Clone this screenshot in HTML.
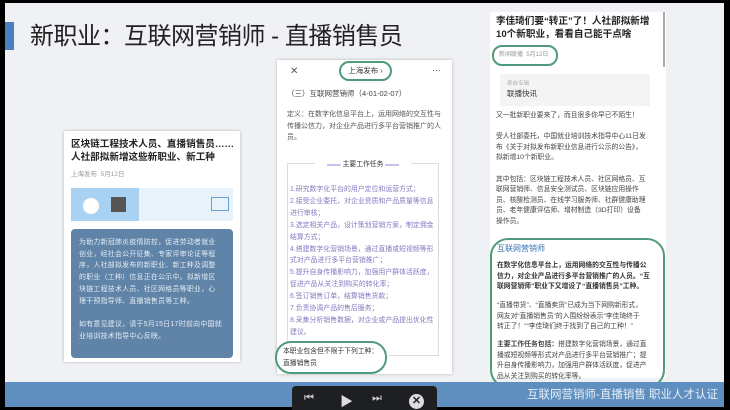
<!DOCTYPE html><html><head><meta charset="utf-8"><style>
*{margin:0;padding:0;box-sizing:border-box}
body{width:730px;height:410px;background:#000;position:relative;overflow:hidden;font-family:"Liberation Sans","Noto Sans CJK SC",sans-serif}
.slide{position:absolute;left:5px;top:3px;width:719px;height:404px;background:#eff1f4}
.abs{position:absolute;white-space:nowrap}
.card{position:absolute;background:#fff;box-shadow:0 0 3px rgba(0,0,0,.25)}
.g{position:absolute;border:2px solid #4f9a7a;border-radius:10px}
</style></head><body>
<div class="slide">
<div class="abs" style="left:0;top:19px;width:9px;height:28px;background:#4a7fc0"></div>
<div class="abs" style="left:25px;top:19px;font-size:24px;color:#222;line-height:30px;letter-spacing:-0.5px">新职业：互联网营销师 - 直播销售员</div>

<div class="card" style="left:59px;top:128px;width:176px;height:231px">
<div class="abs" style="left:7px;top:7px;font-size:9.6px;font-weight:bold;line-height:13px;color:#222">区块链工程技术人员、直播销售员……<br>人社部拟新增这些新职业、新工种</div>
<div class="abs" style="left:7px;top:37px;font-size:6.5px;color:#999">上海发布 &nbsp;5月12日</div>
<div class="abs" style="left:7px;top:57px;width:162px;height:33px;background:#a9d2f2"><div class="abs" style="left:68px;top:0;width:94px;height:33px;background:#e8f2fb"></div><div class="abs" style="left:12px;top:10px;width:16px;height:16px;background:#fff;border-radius:50%"></div><div class="abs" style="left:40px;top:9px;width:15px;height:15px;background:#555"></div><div class="abs" style="left:140px;top:9px;width:18px;height:14px;border:1px solid #6aa0d8"></div></div>
<div class="abs" style="left:7px;top:98px;width:162px;height:129px;background:#5f84a8;border-radius:4px;color:#e4ecf4;font-size:6.9px;line-height:11.7px;padding:8px 8px;letter-spacing:0.3px">为助力新冠肺炎疫情防控，促进劳动者就业<br>创业，经社会公开征集、专家评审论证等程<br>序，人社部拟发布的新职业、新工种及调整<br>的职业（工种）信息正在公示中。拟新增区<br>块链工程技术人员、社区网格员等职业，心<br>理干预指导师、直播销售员等工种。<br><br>如有意见建议，请于5月15日17时前向中国就<br>业培训技术指导中心反映。</div>
</div>

<div class="card" style="left:272px;top:57px;width:175px;height:314px">
<div class="abs" style="left:13px;top:6px;font-size:10px;color:#555">✕</div>
<div class="abs" style="left:155px;top:5px;font-size:9px;color:#555">···</div>
<div class="g" style="left:62px;top:1px;width:53px;height:20px;font-size:7.5px;color:#333;text-align:center;line-height:16px">上海发布 ›</div>
<div class="abs" style="left:10px;top:28px;font-size:7.5px;color:#444">（三）互联网营销师（4-01-02-07）</div>
<div class="abs" style="left:10px;top:49px;font-size:7px;line-height:11.5px;color:#555">定义：在数字化信息平台上，运用网络的交互性与<br>传播公信力，对企业产品进行多平台营销推广的人<br>员。</div>
<div class="abs" style="left:10px;top:103px;width:152px;height:193px;border:1px solid #ddd"></div>
<div class="abs" style="left:38px;top:98px;width:96px;height:10px;background:#fff;text-align:center;font-size:6.8px;color:#333"><span style="color:#c8c0ee">▬▬</span> 主要工作任务 <span style="color:#c8c0ee">▬▬</span></div>
<div class="abs" style="left:13px;top:124px;font-size:6.9px;line-height:11.9px;color:#8878c0">1.研究数字化平台的用户定位和运营方式；<br>2.接受企业委托，对企业资质和产品质量等信息<br>进行审核；<br>3.选定相关产品，设计策划营销方案，制定佣金<br>结算方式；<br>4.搭建数字化营销场景，通过直播或短视频等形<br>式对产品进行多平台营销推广；<br>5.提升自身传播影响力，加强用户群体活跃度，<br>促进产品从关注到购买的转化率；<br>6.签订销售订单，结算销售货款；<br>7.负责协调产品的售后服务；<br>8.采集分析销售数据，对企业或产品提出优化性<br>建议。</div>
<div class="abs" style="left:0;top:282px;width:112px;height:31px;background:#fff"></div>
<div class="g" style="left:-2px;top:281px;width:112px;height:33px;border-radius:16px;font-size:6.8px;color:#333;line-height:12px;padding:3px 6px">本职业包含但不限于下列工种：<br>直播销售员</div>
</div>

<div class="card" style="left:485px;top:9px;width:176px;height:366px;box-shadow:none">
<div class="abs" style="left:173px;top:0;width:2px;height:55px;background:#aaa"></div>
<div class="abs" style="left:6px;top:3px;font-size:9.6px;font-weight:bold;line-height:13px;color:#222">李佳琦们要“转正”了！人社部拟新增<br>10个新职业，看看自己能干点啥</div>
<div class="g" style="left:2px;top:33px;width:66px;height:21px;font-size:6px;color:#999;line-height:17px;padding-left:5px">新闻联播 &nbsp;5月12日</div>
<div class="abs" style="left:10px;top:62px;width:150px;height:32px;background:#f4f4f4;font-size:5.5px;color:#aaa;padding:5px 7px;line-height:10px">来自专辑<br><span style="font-size:7.5px;color:#333">联播快讯</span></div>
<div class="abs" style="left:6px;top:99px;font-size:6.8px;line-height:10.6px;color:#444">又一批新职业要来了，而且很多你早已不陌生！<br><br>受人社部委托，中国就业培训技术指导中心11日发<br>布《关于对拟发布新职业信息进行公示的公告》，<br>拟新增10个新职业。<br><br>其中包括：区块链工程技术人员、社区网格员、互<br>联网营销师、信息安全测试员、区块链应用操作<br>员、核酸检测员、在线学习服务师、社群健康助理<br>员、老年健康评估师、增材制造（3D打印）设备<br>操作员。</div>
<div class="g" style="left:0;top:226px;width:175px;height:150px;border-radius:18px"></div>
<div class="abs" style="left:7px;top:231px;font-size:8px;color:#3a72b0">互联网营销师</div>
<div class="abs" style="left:7px;top:249px;font-size:6.8px;line-height:10.6px;color:#333;font-weight:bold">在数字化信息平台上，运用网络的交互性与传播公<br>信力，对企业产品进行多平台营销推广的人员。“互<br>联网营销师”职业下又增设了“直播销售员”工种。</div>
<div class="abs" style="left:7px;top:289px;font-size:6.8px;line-height:10.6px;color:#444">“直播带货”、“直播卖货”已成为当下网购新形式，<br>网友对“直播销售员”的入围纷纷表示“李佳琦终于<br>转正了！”“李佳琦们终于找到了自己的工种！”</div>
<div class="abs" style="left:7px;top:328px;font-size:6.8px;line-height:10.6px;color:#444"><b>主要工作任务包括：</b>搭建数字化营销场景，通过直<br>播或短视频等形式对产品进行多平台营销推广；提<br>升自身传播影响力，加强用户群体活跃度，促进产<br>品从关注到购买的转化率等。</div>
</div>

<div class="abs" style="left:0;top:379px;width:719px;height:25px;background:#5e8fbf"></div>
<div class="abs" style="left:522px;top:384px;font-size:11.5px;color:#e6eef7;line-height:16px">互联网营销师-直播销售 职业人才认证</div>
</div>
<div class="abs" style="left:292px;top:386px;width:145px;height:24px;background:#1d1f22;border-radius:4px 4px 0 0"></div>
<div class="abs" style="left:304px;top:392px;font-size:11px;color:#ccc;letter-spacing:-2px">⏮</div>
<div class="abs" style="left:340px;top:391px;font-size:13px;color:#ddd">▶</div>
<div class="abs" style="left:372px;top:392px;font-size:11px;color:#ccc">⏭</div>
<div class="abs" style="left:409px;top:394px;width:15px;height:15px;border-radius:50%;background:#ddd;color:#222;font-size:11px;font-weight:bold;text-align:center;line-height:15px">✕</div>
</body></html>
